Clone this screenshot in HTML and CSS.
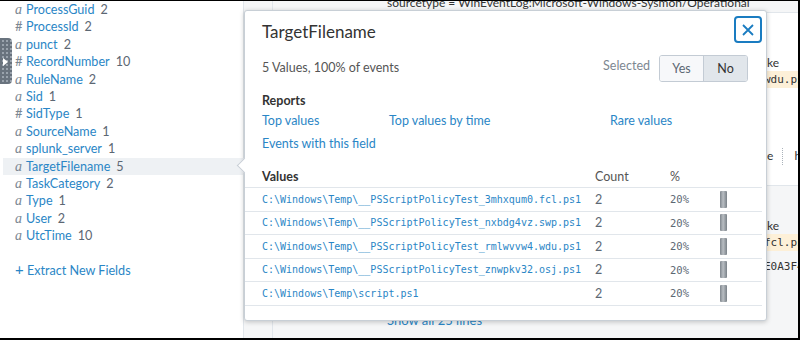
FILE: index.html
```html
<!DOCTYPE html>
<html>
<head>
    <title>Fields - TargetFilename</title>
    <link rel="stylesheet" href="styles.css">
</head>
<body>
<div class="screen">
    <aside class="sidebar">
        <ul class="fields">
            <li class="field"><span class="type">a</span><span class="name">ProcessGuid</span><span class="count">2</span></li>
            <li class="field"><span class="type num">#</span><span class="name">ProcessId</span><span class="count">2</span></li>
            <li class="field"><span class="type">a</span><span class="name">punct</span><span class="count">2</span></li>
            <li class="field"><span class="type num">#</span><span class="name">RecordNumber</span><span class="count">10</span></li>
            <li class="field"><span class="type">a</span><span class="name">RuleName</span><span class="count">2</span></li>
            <li class="field"><span class="type">a</span><span class="name">Sid</span><span class="count">1</span></li>
            <li class="field"><span class="type num">#</span><span class="name">SidType</span><span class="count">1</span></li>
            <li class="field"><span class="type">a</span><span class="name">SourceName</span><span class="count">1</span></li>
            <li class="field"><span class="type">a</span><span class="name">splunk_server</span><span class="count">1</span></li>
            <li class="field active"><span class="type">a</span><span class="name">TargetFilename</span><span class="count">5</span></li>
            <li class="field"><span class="type">a</span><span class="name">TaskCategory</span><span class="count">2</span></li>
            <li class="field"><span class="type">a</span><span class="name">Type</span><span class="count">1</span></li>
            <li class="field"><span class="type">a</span><span class="name">User</span><span class="count">2</span></li>
            <li class="field"><span class="type">a</span><span class="name">UtcTime</span><span class="count">10</span></li>
        </ul>
        <a class="extract"><span class="plus">+</span> Extract New Fields</a>
    </aside>

    <main class="events">
        <div class="event alt top">
            <div class="expand"></div>
            <div class="raw"><div class="line source">sourcetype = WinEventLog:Microsoft-Windows-Sysmon/Operational</div></div>
        </div>
        <div class="event first">
            <div class="expand"></div>
            <div class="raw">
                <div class="line">ke</div>
                <div class="line mono"><span class="hl">wdu.ps1</span></div>
                <div class="line meta">e <span class="sep"></span> h</div>
            </div>
        </div>
        <div class="event alt second">
            <div class="expand"></div>
            <div class="raw">
                <div class="line">ke</div>
                <div class="line mono"><span class="hl">fcl.ps1</span></div>
                <div class="line mono hash">E0A3F4</div>
                <div class="line show-all"><a>Show all 25 lines</a></div>
            </div>
        </div>
    </main>

    <div class="handle"></div>

    <div class="popup">
        <div class="popup-head">
            <h2 class="popup-title">TargetFilename</h2>
            <button class="close">
                <svg width="14" height="14" viewBox="0 0 14 14"><path d="M2 2 L12 12 M12 2 L2 12" stroke="#1a7cc1" stroke-width="1.8" fill="none"/></svg>
            </button>
        </div>
        <div class="summary">
            <span class="summary-text">5 Values, 100% of events</span>
            <div class="selected">
                <span class="selected-label">Selected</span>
                <div class="toggle">
                    <span class="opt">Yes</span>
                    <span class="opt on">No</span>
                </div>
            </div>
        </div>
        <h3 class="section">Reports</h3>
        <div class="reports">
            <a>Top values</a>
            <a>Top values by time</a>
            <a>Rare values</a>
            <a>Events with this field</a>
        </div>
        <div class="values">
            <div class="vrow vhead">
                <span>Values</span><span>Count</span><span>%</span><span></span>
            </div>
            <div class="vrow">
                <a class="val">C:\Windows\Temp\__PSScriptPolicyTest_3mhxqum0.fcl.ps1</a><span>2</span><span class="pct">20%</span>
                <span class="track"><span class="bar" style="width: 20%"></span></span>
            </div>
            <div class="vrow">
                <a class="val">C:\Windows\Temp\__PSScriptPolicyTest_nxbdg4vz.swp.ps1</a><span>2</span><span class="pct">20%</span>
                <span class="track"><span class="bar" style="width: 20%"></span></span>
            </div>
            <div class="vrow">
                <a class="val">C:\Windows\Temp\__PSScriptPolicyTest_rmlwvvw4.wdu.ps1</a><span>2</span><span class="pct">20%</span>
                <span class="track"><span class="bar" style="width: 20%"></span></span>
            </div>
            <div class="vrow">
                <a class="val">C:\Windows\Temp\__PSScriptPolicyTest_znwpkv32.osj.ps1</a><span>2</span><span class="pct">20%</span>
                <span class="track"><span class="bar" style="width: 20%"></span></span>
            </div>
            <div class="vrow">
                <a class="val">C:\Windows\Temp\script.ps1</a><span>2</span><span class="pct">20%</span>
                <span class="track"><span class="bar" style="width: 20%"></span></span>
            </div>
        </div>
    </div>
</div>
</body>
</html>
```

FILE: styles.css
```css
body {
  margin: 0;
  background: #fff;
  font-family: Lato, "Open Sans", sans-serif;
  color: #333;
}

.screen {
  position: relative;
  width: 800px;
  height: 340px;
  box-sizing: border-box;
  border-top: 1px solid #000;
  border-right: 2px solid #000;
  border-bottom: 2px solid #000;
  display: flex;
  overflow: hidden;
}

a {
  color: #2a86c6;
  cursor: pointer;
}

/* field list */

.sidebar {
  width: 243px;
  flex: none;
  border-right: 1px solid #e1e6eb;
}

.fields {
  list-style: none;
  margin: 0;
  padding: 0;
}

.field {
  height: 17.4px;
  line-height: 17.4px;
  font-size: 12.6px;
  padding-left: 15px;
  margin-left: 3px;
  display: flex;
  align-items: center;
}

.field.active {
  background: #eef1f4;
}

.type {
  width: 11px;
  color: #7b8792;
  font-family: "Liberation Serif", serif;
  font-style: italic;
  font-size: 14px;
  margin-left: -3px;
}

.type.num {
  font-family: Lato, sans-serif;
  font-style: normal;
  font-size: 13px;
}

.name {
  color: #2a86c6;
}

.count {
  color: #5c6773;
  margin-left: 6px;
}

.extract {
  display: block;
  margin-top: 17px;
  padding-left: 15px;
  font-size: 12.6px;
  line-height: 17px;
}

.plus {
  font-size: 15px;
}

.handle {
  position: absolute;
  left: 0;
  top: 37px;
  width: 12px;
  height: 46px;
  border-radius: 0 4px 4px 0;
  background-color: #69737e;
  background-image: radial-gradient(circle, #9aa3ad 0.8px, transparent 1.2px);
  background-size: 4px 4px;
  background-position: 1px 1px;
}

.handle::after {
  content: "";
  position: absolute;
  left: 3px;
  top: 20px;
  border-left: 5px solid #fff;
  border-top: 4px solid transparent;
  border-bottom: 4px solid transparent;
}

/* events behind the popup */

.events {
  flex: 1;
  display: flex;
  flex-direction: column;
}

.event {
  display: flex;
  border-bottom: 1px solid #e1e6eb;
}

.event.alt {
  background: #f5f6f7;
}

.event.top {
  height: 11px;
}

.event.first {
  height: 172px;
}

.event.second {
  flex: 1;
  border-bottom: 0;
}

.expand {
  width: 28px;
  flex: none;
  border-right: 1px solid #e1e6eb;
}

.raw {
  flex: 1;
  padding-left: 494px;
  font-size: 12px;
  color: #333;
  white-space: nowrap;
}

.line {
  line-height: 17px;
  height: 17px;
}

.line.source {
  margin-left: -380px;
  line-height: 4px;
  height: 4px;
  font-size: 12px;
}

.mono {
  font-family: "DejaVu Sans Mono", monospace;
  font-size: 11px;
  margin-left: -3px;
}

.hl {
  background: #fdf0d8;
  padding: 2px 0;
}

.first .raw {
  padding-top: 41px;
}

.first .meta {
  margin-top: 59px;
}

.sep {
  display: inline-block;
  width: 0;
  height: 17px;
  vertical-align: middle;
  border-left: 1px dotted #aab2ba;
  margin: 0 8px 0 6px;
}

.second .raw {
  padding-top: 31px;
}

.second .hash {
  margin-top: 7px;
}

.show-all {
  margin-left: -380px;
  margin-top: 37px;
  font-size: 13px;
}

/* popup */

.popup {
  position: absolute;
  left: 244px;
  top: 9px;
  width: 523px;
  height: 311px;
  box-sizing: border-box;
  background: #fff;
  border: 1px solid #c8cfd6;
  border-radius: 3px;
  box-shadow: 0 1px 5px rgba(0, 0, 0, 0.22);
}

.popup::before {
  content: "";
  position: absolute;
  left: -6px;
  top: 149px;
  width: 10px;
  height: 10px;
  background: #fff;
  border-left: 1px solid #c8cfd6;
  border-bottom: 1px solid #c8cfd6;
  transform: rotate(45deg);
}

.popup-head {
  display: flex;
  justify-content: space-between;
  align-items: flex-start;
  padding: 5px 4px 0 17px;
}

.popup-title {
  margin: 6px 0 0;
  font-size: 17px;
  line-height: 20px;
  font-weight: 400;
  color: #333;
}

.close {
  width: 28px;
  height: 27px;
  padding: 0;
  border: 2px solid #1a7cc1;
  border-radius: 4px;
  background: #fff;
  display: flex;
  align-items: center;
  justify-content: center;
}

.summary {
  margin-top: 12px;
  padding: 0 18px 0 17px;
  display: flex;
  justify-content: space-between;
  align-items: center;
  font-size: 12.5px;
}

.summary-text {
  color: #555;
  margin-top: -3px;
}

.selected {
  display: flex;
  align-items: center;
  gap: 9px;
}

.selected-label {
  color: #7d8791;
  margin-top: -6px;
}

.toggle {
  display: flex;
  height: 27px;
  box-sizing: border-box;
  border: 1px solid #c3cbd4;
  border-radius: 3px;
  overflow: hidden;
}

.opt {
  width: 43px;
  display: flex;
  align-items: center;
  justify-content: center;
  background: #f7f8fa;
  color: #5c6773;
}

.opt + .opt {
  border-left: 1px solid #c3cbd4;
}

.opt.on {
  background: #e1e6eb;
  color: #333;
}

.section {
  margin: 10px 0 0;
  padding-left: 17px;
  font-size: 12.5px;
  line-height: 17px;
  font-weight: 700;
  color: #333;
}

.reports {
  margin-top: 3px;
  padding-left: 17px;
  display: grid;
  grid-template-columns: 127px 221px 1fr;
  row-gap: 6px;
  font-size: 12.5px;
  line-height: 17px;
}

.values {
  margin: 14px 4px 0 0;
}

.vrow {
  display: grid;
  grid-template-columns: 333px 75px 50px 1fr;
  align-items: center;
  height: 23.5px;
  box-sizing: border-box;
  padding-left: 17px;
  border-bottom: 1px solid #e1e6eb;
  font-size: 12.5px;
  color: #5c6773;
}

.vrow.vhead {
  height: 22px;
  font-weight: 700;
  color: #333;
}

.vhead span + span {
  font-weight: 400;
  color: #555;
}

.val {
  font-family: "DejaVu Sans Mono", monospace;
  font-size: 10px;
  white-space: nowrap;
}

.pct {
  font-family: "DejaVu Sans Mono", monospace;
  font-size: 10.5px;
}

.track {
  display: block;
  width: 36px;
  height: 17px;
}

.bar {
  display: block;
  height: 17px;
  border-radius: 1px;
  background: linear-gradient(to right, #7f868d, #b9bec3 45%, #7a8188);
}
```
